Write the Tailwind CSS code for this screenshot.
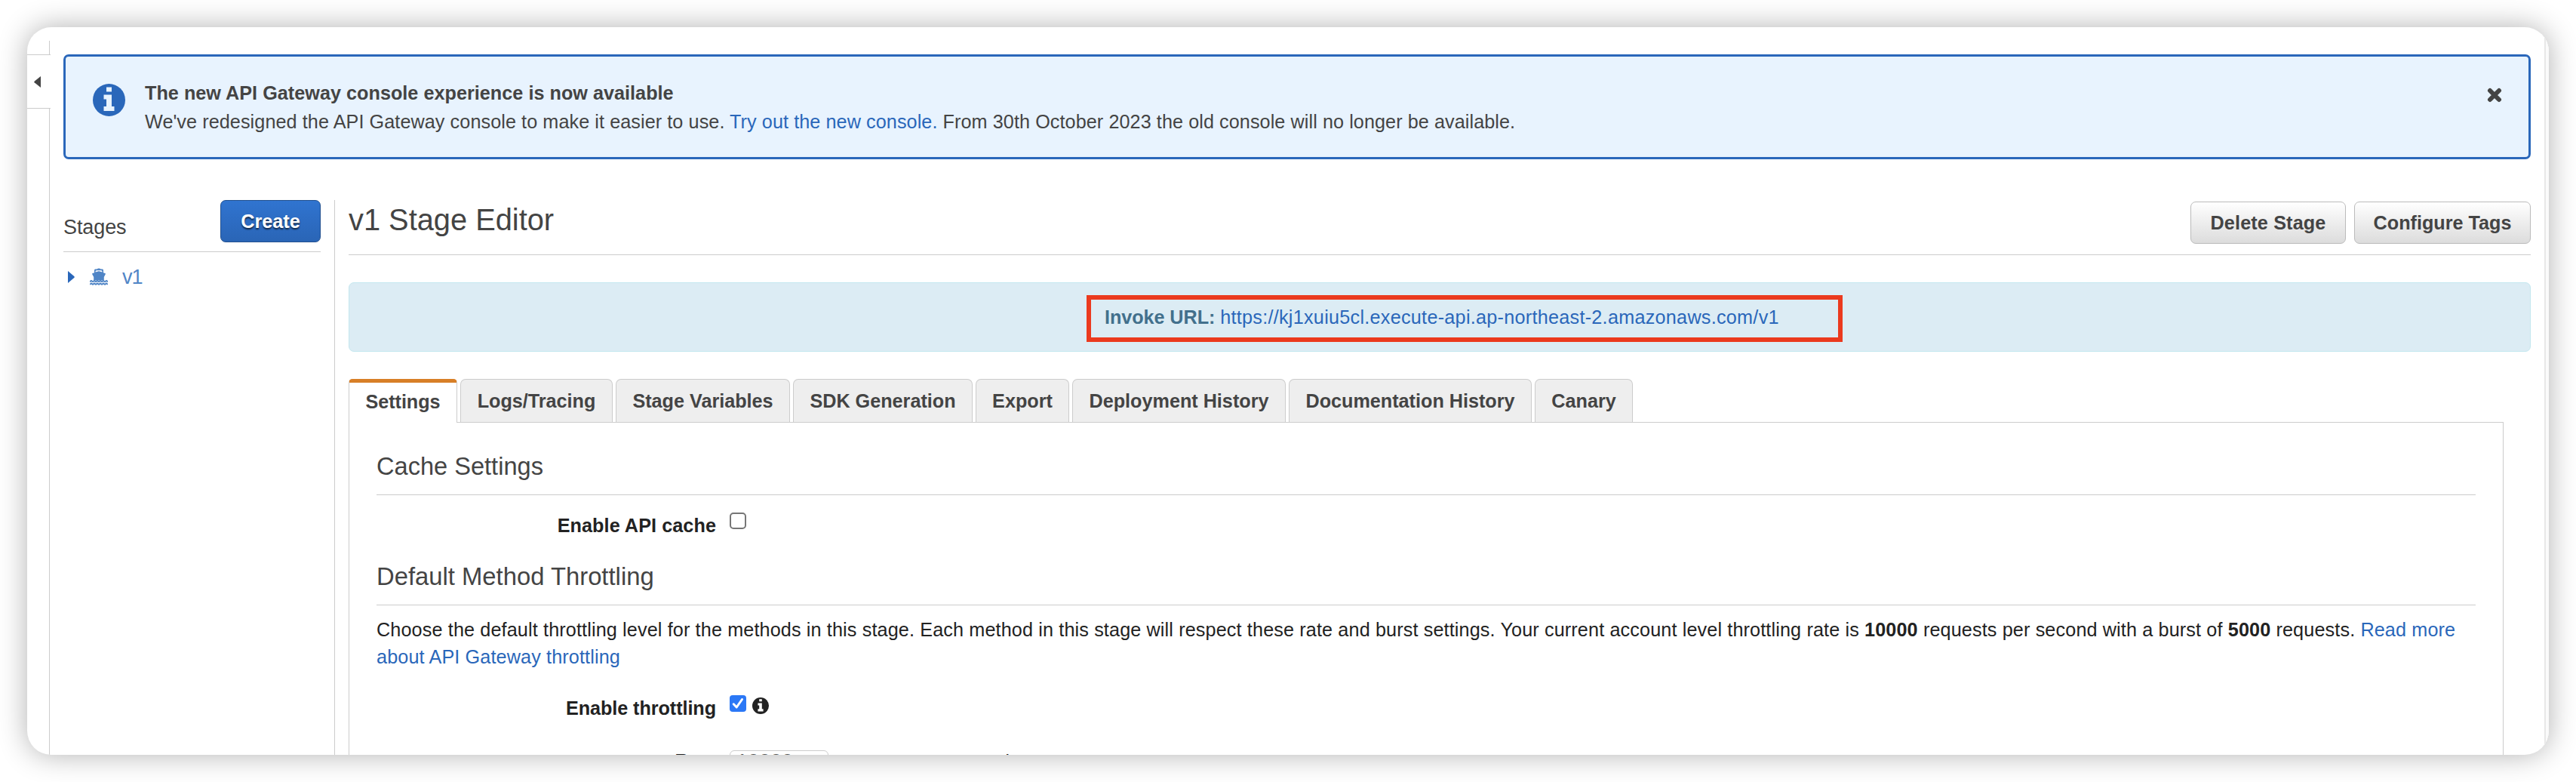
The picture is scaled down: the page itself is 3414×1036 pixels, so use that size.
<!DOCTYPE html>
<html lang="en">
<head>
<meta charset="utf-8">
<title>API Gateway - v1 Stage Editor</title>
<script src="https://cdn.jsdelivr.net/npm/@tailwindcss/browser@4"></script>
</head>
<body class="w-[3414px] h-[1036px] overflow-hidden bg-white p-9 font-['Liberation_Sans',Arial,sans-serif] text-[25.2px] leading-9 text-[#444]">
<div class="flex w-[3342px] h-[964px] overflow-hidden rounded-[32px] bg-white shadow-[0_0_38px_rgba(0,0,0,0.31)]">

  <!-- collapsed navigation rail -->
  <aside class="flex w-[30px] shrink-0 flex-col pt-[18px]">
    <div class="h-[18px] shrink-0 border-r border-[#ccc]"></div>
    <button class="flex h-[72px] w-[31px] shrink-0 items-center border-y border-[#ccc] pl-[9px]">
      <svg class="h-[15px] w-[9px]" viewBox="0 0 9 15"><path d="M9 0v15L.6 8.3Q0 7.5.6 6.7Z" fill="#444"/></svg>
    </button>
    <div class="grow border-r border-[#ccc]"></div>
  </aside>

  <main class="flex grow flex-col pt-9 pl-[18px]">
    <!-- announcement -->
    <section class="flex h-[139px] w-[3270px] shrink-0 rounded-[7px] border-3 border-[#2a67ba] bg-[#e8f3fe] pt-[29px] pl-9">
      <svg class="mt-[7px] h-[43px] w-[43px]" viewBox="0 0 43 43"><circle cx="21.5" cy="21.5" r="21.5" fill="#2a67ba"/><path d="M18 4.5h7v6h-7zM14.500 14.500h10.500V30h3.500v6h-14v-6h3.500v-9.500h-3.500z" fill="#e8f3fe"/></svg>
      <div class="ml-[26px] grow leading-[38px]">
        <h2 class="font-bold tracking-[0.03px]">The new API Gateway console experience is now available</h2>
        <p class="tracking-[0.08px]">We've redesigned the API Gateway console to make it easier to use. <a class="text-[#2a67ba]">Try out the new console.</a> From 30th October 2023 the old console will no longer be available.</p>
      </div>
      <svg class="mt-[12px] mr-[35px] h-[20px] w-[20px]" viewBox="0 0 20 20"><path d="M4 4l12 12M16 4L4 16" stroke="#444" stroke-width="6" stroke-linecap="round"/></svg>
    </section>

    <div class="mt-[54px] flex grow">
      <!-- stage tree -->
      <nav class="w-[341px] shrink-0">
        <div class="flex h-[69px] justify-between border-b border-[#ccc]">
          <span class="mt-[18px] text-[27px] tracking-[-0.1px]">Stages</span>
          <button class="h-14 w-[133px] rounded-[7px] border border-[#21508f] bg-linear-to-b from-[#3074d0] to-[#2a65b6] font-bold text-white [text-shadow:0_2px_2px_rgba(0,0,0,0.65)]">Create</button>
        </div>
        <div class="flex items-center pt-[15px] pl-[6px] text-[#5085c6]">
          <svg class="h-4 w-[9px]" viewBox="0 0 9 16"><path d="M0 0v16L8.500 8.800Q9 8 8.500 7.200Z" fill="#2a67ba"/></svg>
          <svg class="ml-[20px] h-[24px] w-6" viewBox="0 0 24 24"><path d="M9.500 1.500Q12-.7 14.500 1.500h2.200Q18 1.700 18 3v3.300l2.700 1Q21 7.500 20.800 8.200L18.800 12v4.500H5.200V12L3.200 8.200Q3 7.500 3.300 7.300L6 6.300V3q0-1.300 1.300-1.500z" fill="currentColor"/><path d="M7.500 5.600V4.800Q7.500 3.400 9 3.200h6q1.500.2 1.500 1.600v.8L12 4.200z" fill="#fff"/><path d="M0 18.200l2-1.300 2 1.300 2-1.300 2 1.300 2-1.300 2 1.300 2-1.300 2 1.300 2-1.300 2 1.300 2-1.300 2 1.300M0 21.800l2-1.300 2 1.300 2-1.300 2 1.300 2-1.300 2 1.300 2-1.300 2 1.300 2-1.300 2 1.300 2-1.300 2 1.300" fill="none" stroke="currentColor" stroke-width="1.900"/></svg>
          <span class="ml-[19px] text-[27px] tracking-[-1px]">v1</span>
        </div>
      </nav>

      <!-- editor -->
      <div class="ml-[18px] w-[2911px] border-l border-[#ccc] pl-[18px]">
        <header class="flex h-[73px] border-b border-[#ccc]">
          <h1 class="grow text-[39.8px] leading-[52px]">v1 Stage Editor</h1>
          <button class="mt-[2px] h-14 w-[206px] rounded-[7px] border border-[#bbb] bg-linear-to-b from-white to-[#dcdcdc] font-bold tracking-[0.15px]">Delete Stage</button>
          <button class="mt-[2px] ml-[11px] h-14 w-[234px] rounded-[7px] border border-[#bbb] bg-linear-to-b from-white to-[#dcdcdc] font-bold">Configure Tags</button>
        </header>

        <div class="relative mt-9 flex h-[92px] items-center rounded-[7px] border border-[#c3e7ef] bg-[#dcecf4] pl-[1001px] whitespace-pre text-[#2a67ba]"><b class="tracking-[-0.06px] text-[#42708c]">Invoke URL: </b><a class="tracking-[0.27px]">https://kj1xuiu5cl.execute-api.ap-northeast-2.amazonaws.com/v1</a>
          <div class="absolute top-[16px] left-[977px] h-[62px] w-[1002px] border-6 border-[#eb3a1e]"></div>
        </div>

        <div class="mt-9 flex h-[57px] gap-1 text-center leading-[56px] font-bold">
          <div class="z-10 h-[58px] w-[144px] rounded-t-[5px] border-x border-t-5 border-x-[#ccc] border-t-[#d87f27] bg-white leading-[50px] tracking-[-0.05px]">Settings</div>
          <div class="w-[202px] rounded-t-[7px] border border-b-0 border-[#ccc] bg-[#eee]">Logs/Tracing</div>
          <div class="w-[231px] rounded-t-[7px] border border-b-0 border-[#ccc] bg-[#eee]">Stage Variables</div>
          <div class="w-[238px] rounded-t-[7px] border border-b-0 border-[#ccc] bg-[#eee]">SDK Generation</div>
          <div class="w-[124px] rounded-t-[7px] border border-b-0 border-[#ccc] bg-[#eee]">Export</div>
          <div class="w-[283px] rounded-t-[7px] border border-b-0 border-[#ccc] bg-[#eee]">Deployment History</div>
          <div class="w-[322px] rounded-t-[7px] border border-b-0 border-[#ccc] bg-[#eee]">Documentation History</div>
          <div class="w-[130px] rounded-t-[7px] border border-b-0 border-[#ccc] bg-[#eee]">Canary</div>
        </div>

        <section class="h-[500px] w-[2856px] border border-[#ccc] px-9 pt-[36px] text-[#222]">
          <h2 class="h-[60px] border-b border-[#ccc] text-[32.6px] leading-[44px] text-[#444]">Cache Settings</h2>
          <div class="flex pt-[22px]">
            <label class="w-[450px] text-right font-bold tracking-[0.08px]">Enable API cache</label>
            <span class="mt-[1px] ml-[18px] h-[22px] w-[22px] rounded-[5px] border-2 border-[#767676] bg-white"></span>
          </div>
          <h2 class="mt-[28px] h-[60px] border-b border-[#ccc] text-[32.8px] leading-[44px] text-[#444]">Default Method Throttling</h2>
          <p class="pt-[14px] tracking-[0.134px]">Choose the default throttling level for the methods in this stage. Each method in this stage will respect these rate and burst settings. Your current account level throttling rate is <b>10000</b> requests per second with a burst of <b>5000</b> requests. <a class="text-[#2a67ba]">Read more<br>about API Gateway throttling</a></p>
          <div class="flex pt-8">
            <label class="w-[450px] text-right font-bold tracking-[-0.06px]">Enable throttling</label>
            <svg class="mt-px ml-[18px] h-[22px] w-[22px]" viewBox="0 0 22 22"><rect width="22" height="22" rx="4" fill="#2b78f6"/><path d="M5.200 11.800l4 4.200L16.500 5.500" fill="none" stroke="#fff" stroke-width="3" stroke-linecap="round" stroke-linejoin="round"/></svg>
            <svg class="mt-[4px] ml-2 h-[22px] w-[22px]" viewBox="0 0 43 43"><circle cx="21.500" cy="21.500" r="21.500" fill="#222"/><path d="M18 4.500h7v6h-7zM14.500 14.500h10.500V30h3.500v6h-14v-6h3.500v-9.500h-3.500z" fill="#fff"/></svg>
          </div>
          <div class="flex pt-[34px]">
            <label class="w-[450px] text-right font-bold">Rate</label>
            <span class="mt-[4px] ml-[18px] h-[50px] w-[131px] rounded-[6px] border border-[#ccc] pl-[8px] text-[27px] leading-[29px] text-[#555]">10000</span>
            <span class="mt-px ml-[10px] tracking-[0.1px]">requests per second</span>
          </div>
        </section>
      </div>
    </div>
  </main>

  <!-- scrollbar track -->
  <div class="w-[6px] shrink-0 border-l-2 border-[#e8e8e8] bg-[#fafafa]"></div>
</div>
</body>
</html>
